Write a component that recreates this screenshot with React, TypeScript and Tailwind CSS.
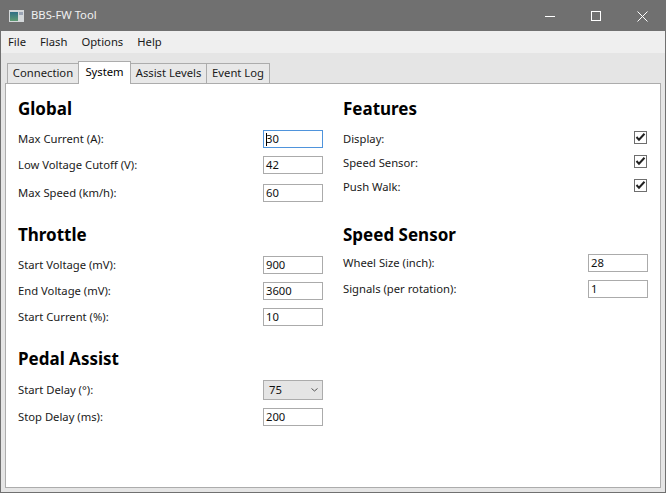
import React from 'react';

const Heading = ({ children, className = '' }: { children: React.ReactNode; className?: string }) => (
  <h2 className={`h-[24px] pt-px text-[17px] leading-[24px] font-bold text-black ${className}`}>{children}</h2>
);

const Field = ({ label, value, focused, className = '' }: { label: string; value: string; focused?: boolean; className?: string }) => (
  <div className={`flex h-[18px] items-center justify-between text-[11.25px] ${className}`}>
    <span className="text-[#1a1a1a]">{label}</span>
    <div className={`relative flex h-[18px] w-[60px] items-center border bg-white pl-[2px] text-[#111] ${focused ? 'border-[#4f94dc]' : 'border-[#ababab]'}`}>
      {focused && <span className="absolute left-[2px] top-[2px] h-[13px] w-px bg-black" />}
      {value}
    </div>
  </div>
);

const Check = ({ label, className = '' }: { label: string; className?: string }) => (
  <div className={`flex h-[13px] items-center justify-between text-[11.25px] ${className}`}>
    <span className="pt-[3px] text-[#1a1a1a]">{label}</span>
    <div className="mr-px flex h-[13px] w-[13px] items-center justify-center border border-[#6e6e6e] bg-white">
      <svg width="11" height="11" viewBox="0 0 11 11" fill="none" stroke="#222" strokeWidth="2">
        <path d="M1.5 5 L4 7.8 L9.5 1.8" />
      </svg>
    </div>
  </div>
);

const tabs = ['Connection', 'System', 'Assist Levels', 'Event Log'];
const tabWidths = ['w-[72px]', 'w-[53px]', 'w-[77px]', 'w-[64px]'];

export default function App() {
  return (
    <div className="flex h-[493px] w-[666px] flex-col border border-[#707070] bg-[#e5e5e5] font-['Noto_Sans',sans-serif]">
      {/* title bar */}
      <div className="flex h-[30px] shrink-0 items-center bg-[#707070] text-white">
        <svg className="ml-[8px]" width="15" height="12" viewBox="0 0 15 12">
          <defs>
            <linearGradient id="icon-fill" x1="0" y1="0" x2="0" y2="1">
              <stop offset="0" stopColor="#2f6f86" />
              <stop offset="1" stopColor="#5f9a72" />
            </linearGradient>
          </defs>
          <rect x="0" y="0" width="15" height="12" fill="#d4d8da" />
          <rect x="1" y="2" width="8" height="9" fill="url(#icon-fill)" />
          <rect x="10" y="2" width="4" height="3" fill="#9aa4b4" />
        </svg>
        <span className="ml-[7px] pb-px text-[11.25px] text-[#f0f0f0]">BBS-FW Tool</span>
        <div className="ml-auto flex items-center">
          <div className="mr-[36px] h-px w-[10px] bg-white" />
          <div className="mr-[36px] h-[10px] w-[10px] border border-white" />
          <svg className="mr-[17px]" width="11" height="11" viewBox="0 0 11 11" stroke="white" strokeWidth="1">
            <path d="M0.5 0.5 L10.5 10.5 M10.5 0.5 L0.5 10.5" />
          </svg>
        </div>
      </div>
      {/* menu */}
      <div className="flex h-[22px] shrink-0 items-center gap-[14px] bg-[#efefef] pl-[7px] text-[11.25px] text-[#1a1a1a]">
        <span>File</span>
        <span>Flash</span>
        <span>Options</span>
        <span>Help</span>
      </div>
      {/* tabs */}
      <div className="flex h-[31px] shrink-0 items-end pl-[6px] text-[11.25px]">
        {tabs.map((t, i) => (
          <div
            key={t}
            className={`flex items-center justify-center border border-[#acacac] border-b-0 ${tabWidths[i]} ${
              t === 'System' ? 'relative z-10 h-[23px] bg-white pb-[2px] text-black' : 'h-[21px] bg-[#e8e8e8] pb-px text-[#1a1a1a]'
            } ${i > 0 ? '-ml-px' : ''}`}
          >
            {t}
          </div>
        ))}
      </div>
      {/* panel */}
      <div className="-mt-px mb-[4px] ml-[4px] mr-[4px] grid flex-1 grid-cols-2 gap-[20px] border border-[#acacac] bg-white px-[12px]">
        <div>
          <Heading className="mt-[12px]">Global</Heading>
          <Field className="mt-[10px]" label="Max Current (A):" value="30" focused />
          <Field className="mt-[8px]" label="Low Voltage Cutoff (V):" value="42" />
          <Field className="mt-[10px]" label="Max Speed (km/h):" value="60" />
          <Heading className="mt-[20px]">Throttle</Heading>
          <Field className="mt-[10px]" label="Start Voltage (mV):" value="900" />
          <Field className="mt-[8px]" label="End Voltage (mV):" value="3600" />
          <Field className="mt-[8px]" label="Start Current (%):" value="10" />
          <Heading className="mt-[20px]">Pedal Assist</Heading>
          <div className="mt-[10px] flex h-[20px] items-center justify-between text-[11.25px]">
            <span className="text-[#1a1a1a]">Start Delay (°):</span>
            <div className="flex h-[20px] w-[60px] items-center justify-between border border-[#acacac] bg-[#e5e5e5] pl-[5px] pr-[4px] text-[#111]">
              75
              <svg width="7" height="4" viewBox="0 0 7 4" fill="none" stroke="#555" strokeWidth="1">
                <path d="M0.5 0.5 L3.5 3 L6.5 0.5" />
              </svg>
            </div>
          </div>
          <Field className="mt-[8px]" label="Stop Delay (ms):" value="200" />
        </div>
        <div>
          <Heading className="mt-[12px]">Features</Heading>
          <Check className="mt-[11px]" label="Display:" />
          <Check className="mt-[11px]" label="Speed Sensor:" />
          <Check className="mt-[11px]" label="Push Walk:" />
          <Heading className="mt-[30px]">Speed Sensor</Heading>
          <Field className="mt-[8px]" label="Wheel Size (inch):" value="28" />
          <Field className="mt-[8px]" label="Signals (per rotation):" value="1" />
        </div>
      </div>
    </div>
  );
}
